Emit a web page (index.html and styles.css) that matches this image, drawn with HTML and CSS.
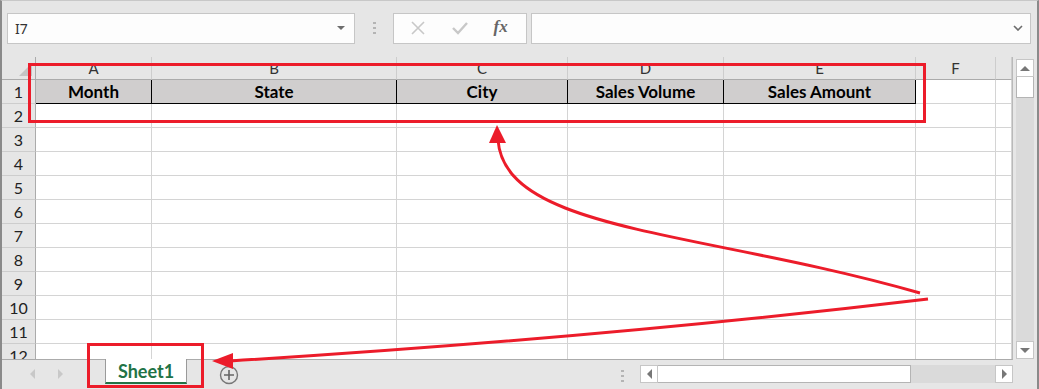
FILE: index.html
```html
<!DOCTYPE html>
<html lang="en">
<head>
    <meta charset="UTF-8">
    <meta name="viewport" content="width=device-width, initial-scale=1.0">
    <title>Sheet1</title>
    <link rel="stylesheet" href="styles.css">
</head>
<body>
    <div class="window">
        <div class="formula-bar">
            <div class="name-box">
                <span>I7</span>
                <span class="small-arrow"></span>
            </div>
            <div class="grip"></div>
            <div class="fx-buttons">
                <svg width="16" height="16" viewBox="0 0 16 16"><path d="M2 2 L14 14 M14 2 L2 14" stroke="#c8c8c8" stroke-width="1.6" fill="none"/></svg>
                <svg width="18" height="16" viewBox="0 0 18 16"><path d="M2 8 L7 13 L16 3" stroke="#c8c8c8" stroke-width="2.4" fill="none"/></svg>
                <span class="fx">fx</span>
            </div>
            <div class="formula-input">
                <svg width="10" height="6" viewBox="0 0 10 6"><path d="M1 1 L5 5 L9 1" stroke="#6d6d6d" stroke-width="1.6" fill="none"/></svg>
            </div>
        </div>

        <div class="sheet-area">
            <div class="grid">
                <div class="corner"><span class="corner-tri"></span></div>
                <div class="col-hdr">A</div>
                <div class="col-hdr">B</div>
                <div class="col-hdr">C</div>
                <div class="col-hdr">D</div>
                <div class="col-hdr">E</div>
                <div class="col-hdr">F</div>
                <div class="col-hdr"></div>

                <div class="row-hdr">1</div>
                <div class="cell head">Month</div>
                <div class="cell head">State</div>
                <div class="cell head">City</div>
                <div class="cell head">Sales Volume</div>
                <div class="cell head">Sales Amount</div>
                <div class="cell"></div>
                <div class="cell"></div>
            </div>
            <div class="vscroll">
                <div class="sbtn"><span class="tri-up"></span></div>
                <div class="vthumb"></div>
                <div class="vtrack"></div>
                <div class="sbtn"><span class="tri-down"></span></div>
            </div>
        </div>

        <div class="tabs-bar">
            <div class="tab-nav">
                <span class="tri-left"></span>
                <span class="tri-right"></span>
            </div>
            <div class="sheet-tab">Sheet1</div>
            <div class="add-sheet">
                <svg width="20" height="20" viewBox="0 0 20 20"><circle cx="10" cy="10" r="8.5" stroke="#777" stroke-width="1.4" fill="none"/><path d="M10 5 V15 M5 10 H15" stroke="#666" stroke-width="1.6"/></svg>
            </div>
            <div class="spacer"></div>
            <div class="grip grip-h"></div>
            <div class="hscroll">
                <div class="sbtn"><span class="tri-left dark"></span></div>
                <div class="hthumb"></div>
                <div class="htrack"></div>
                <div class="sbtn"><span class="tri-right dark"></span></div>
            </div>
        </div>

        <svg class="marks" width="1039" height="389" viewBox="0 0 1039 389">
            <rect x="29.5" y="64.5" width="895" height="57" fill="none" stroke="#ec1c2a" stroke-width="3"/>
            <rect x="88.5" y="344.5" width="114" height="42" fill="none" stroke="#ec1c2a" stroke-width="3"/>
            <path d="M920 293 C 700 230, 505 232, 498 140" fill="none" stroke="#ec1c2a" stroke-width="3"/>
            <polygon points="497,125 489,143 506,143" fill="#ec1c2a"/>
            <path d="M928 299 Q 600 338, 230 361" fill="none" stroke="#ec1c2a" stroke-width="3"/>
            <polygon points="212,361 233,353 233,369" fill="#ec1c2a"/>
        </svg>
    </div>

    <script>
        // empty rows 2-12
        const grid = document.querySelector('.grid');
        for (let r = 2; r <= 12; r++) {
            let hdr = document.createElement('div');
            hdr.className = 'row-hdr';
            hdr.textContent = r;
            grid.appendChild(hdr);
            for (let c = 0; c < 7; c++) {
                let cell = document.createElement('div');
                cell.className = 'cell';
                grid.appendChild(cell);
            }
        }
    </script>
</body>
</html>
```

FILE: styles.css
```css
body {
    margin: 0;
    background: #e6e6e6;
    font-family: Lato, "Noto Sans", sans-serif;
    color: #222;
}
.window {
    position: relative;
    width: 1039px;
    height: 389px;
    overflow: hidden;
    box-sizing: border-box;
    border-top: 1px solid #c8c8c8;
    border-left: 2px solid #8a8a8a;
    border-right: 2px solid #8a8a8a;
    background: #e6e6e6;
}
.formula-bar {
    display: flex;
    align-items: center;
    height: 56px;
    padding-left: 5px;
}
.name-box {
    display: flex;
    align-items: center;
    justify-content: space-between;
    width: 348px;
    height: 31px;
    margin-top: -2px;
    box-sizing: border-box;
    border: 1px solid #c6c6c6;
    background: #fdfdfd;
    padding: 0 9px 0 7px;
    font-family: "Noto Sans", sans-serif;
    font-size: 14px;
    color: #333;
}
.small-arrow {
    width: 0;
    height: 0;
    border-left: 4px solid transparent;
    border-right: 4px solid transparent;
    border-top: 4px solid #6d6d6d;
}
.grip {
    width: 3px;
    height: 12px;
    margin: -2px 17px 0 18px;
    background: repeating-linear-gradient(#b4b4b4 0 2px, transparent 2px 5px);
}
.fx-buttons {
    display: flex;
    align-items: center;
    justify-content: space-around;
    width: 134px;
    height: 31px;
    margin-top: -2px;
    box-sizing: border-box;
    border: 1px solid #c6c6c6;
    background: #fdfdfd;
    padding: 0 6px 0 4px;
}
.fx {
    font-family: "Liberation Serif", serif;
    font-style: italic;
    font-weight: bold;
    font-size: 17px;
    color: #666;
    margin-top: -3px;
}
.formula-input {
    display: flex;
    align-items: center;
    justify-content: flex-end;
    width: 500px;
    height: 31px;
    margin-top: -2px;
    margin-left: 4px;
    box-sizing: border-box;
    border: 1px solid #c6c6c6;
    background: #fdfdfd;
    padding-right: 7px;
}
.sheet-area {
    display: flex;
    height: 303px;
}
.grid {
    display: grid;
    grid-template-columns: 34px 116px 245px 171px 156px 192px 80px 16px;
    grid-template-rows: 23px;
    grid-auto-rows: 24px;
    width: 1011px;
    overflow: hidden;
    border-right: 1px solid #b9b9b9;
    border-bottom: 1px solid #ababab;
    box-sizing: border-box;
    background: #fff;
}
.corner {
    position: relative;
    background: #e6e6e6;
    border-right: 1px solid #ababab;
    border-bottom: 1px solid #ababab;
}
.corner-tri {
    position: absolute;
    right: 3px;
    bottom: 3px;
    width: 0;
    height: 0;
    border-left: 13px solid transparent;
    border-bottom: 13px solid #c4c4c4;
}
.col-hdr {
    background: #e6e6e6;
    border-right: 1px solid #cdcdcd;
    border-bottom: 1px solid #ababab;
    text-align: center;
    font-size: 15px;
    line-height: 23px;
    color: #333;
}
.row-hdr {
    background: #e6e6e6;
    border-right: 1px solid #ababab;
    border-bottom: 1px solid #cdcdcd;
    text-align: center;
    font-size: 16px;
    line-height: 24px;
    color: #222;
}
.cell {
    border-right: 1px solid #d4d4d4;
    border-bottom: 1px solid #d4d4d4;
}
.cell.head {
    background: #d0cece;
    border-right-color: #000;
    border-bottom-color: #000;
    text-align: center;
    font-weight: bold;
    font-size: 17px;
    line-height: 23px;
    color: #000;
}
.vscroll {
    display: flex;
    flex-direction: column;
    width: 18px;
    margin: 2px 0 1px 3px;
}
.sbtn {
    display: flex;
    align-items: center;
    justify-content: center;
    width: 18px;
    height: 18px;
    box-sizing: border-box;
    border: 1px solid #c6c6c6;
    background: #fff;
}
.vthumb {
    height: 21px;
    box-sizing: border-box;
    border: 1px solid #b4b4b4;
    border-top: none;
    background: #fff;
}
.vtrack {
    flex: 1;
    background: #dadada;
}
.tri-up, .tri-down {
    width: 0;
    height: 0;
    border-left: 5px solid transparent;
    border-right: 5px solid transparent;
}
.tri-up {
    border-bottom: 5px solid #777;
}
.tri-down {
    border-top: 5px solid #777;
}
.tri-left, .tri-right {
    width: 0;
    height: 0;
    border-top: 5px solid transparent;
    border-bottom: 5px solid transparent;
}
.tri-left {
    border-right: 5px solid #c8c8c8;
}
.tri-right {
    border-left: 5px solid #c8c8c8;
}
.tri-left.dark {
    border-right-color: #777;
}
.tri-right.dark {
    border-left-color: #777;
}
.tabs-bar {
    display: flex;
    align-items: flex-start;
    height: 29px;
}
.tab-nav {
    display: flex;
    align-items: center;
    gap: 23px;
    width: 103px;
    height: 28px;
    padding-left: 28px;
    box-sizing: border-box;
}
.sheet-tab {
    width: 82px;
    height: 25px;
    box-sizing: border-box;
    margin-top: -1px;
    border-left: 1px solid #9a9a9a;
    border-right: 1px solid #9a9a9a;
    border-bottom: 2px solid #217346;
    background: #fff;
    text-align: center;
    font-weight: bold;
    font-size: 18px;
    line-height: 24px;
    color: #217346;
}
.add-sheet {
    margin: 5px 0 0 32px;
    height: 20px;
}
.spacer {
    flex: 1;
}
.grip-h {
    margin: 10px 16px 0 0;
}
.hscroll {
    display: flex;
    width: 373px;
    height: 18px;
    margin: 5px 24px 0 0;
}
.hthumb {
    width: 253px;
    box-sizing: border-box;
    border: 1px solid #b4b4b4;
    border-left: none;
    background: #fff;
}
.htrack {
    flex: 1;
    background: #dadada;
}
.marks {
    position: absolute;
    top: -1px;
    left: -2px;
    pointer-events: none;
}
```
